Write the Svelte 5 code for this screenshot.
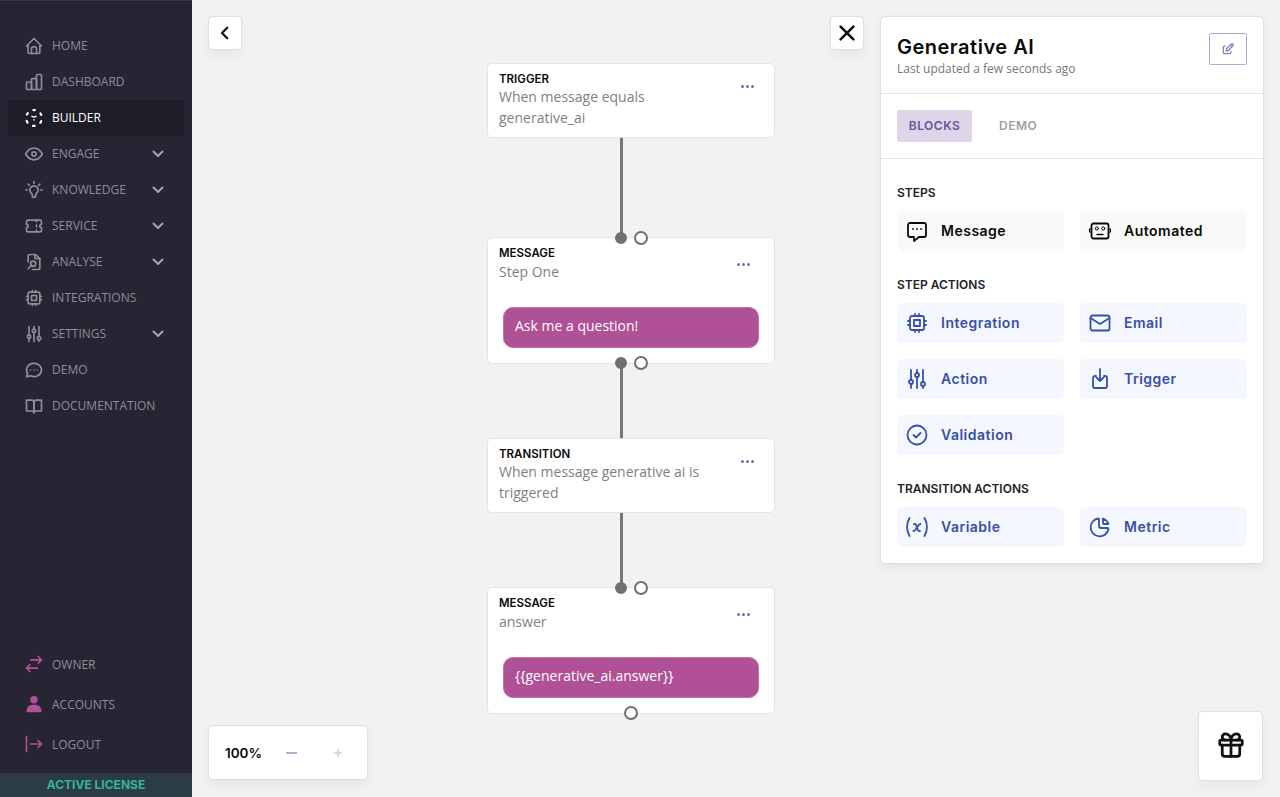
<script>
  const icons = {
    home: '<path d="M5 12H3l9-9 9 9h-2"/><path d="M5 12v7a2 2 0 0 0 2 2h10a2 2 0 0 0 2-2v-7"/><path d="M9 21v-6a2 2 0 0 1 2-2h2a2 2 0 0 1 2 2v6"/>',
    chart: '<rect x="3" y="12" width="6" height="9" rx="1"/><rect x="9" y="8" width="6" height="13" rx="1"/><rect x="15" y="3" width="6" height="18" rx="1"/>',
    builder: '<circle cx="12" cy="12" r="9.500" stroke-width="2.600" stroke-dasharray="2.200 7.750" stroke-dashoffset="1.100" transform="rotate(-90 12 12)"/><path d="M9.500 10l2.500 1 2.500-1M12 14v.5" stroke-width="1.800"/>',
    eye: '<circle cx="12" cy="12" r="2.5"/><path d="M22 12c-2.667 4.667-6 7-10 7s-7.333-2.333-10-7c2.667-4.667 6-7 10-7s7.333 2.333 10 7"/>',
    bulb: '<path d="M2 12h2m8-10v2m8 8h2M5 5l1.4 1.4M19 5l-1.4 1.4"/><path d="M9 16a5 5 0 1 1 6 0 3.5 3.5 0 0 0-1 3 2 2 0 0 1-4 0 3.5 3.5 0 0 0-1-3"/>',
    ticket: '<path d="M15 5v2M15 11v2M15 17v2"/><path d="M5 5h14a2 2 0 0 1 2 2v3a2 2 0 0 0 0 4v3a2 2 0 0 1-2 2H5a2 2 0 0 1-2-2v-3a2 2 0 0 0 0-4V7a2 2 0 0 1 2-2"/>',
    analyse: '<path d="M13 3v4a1 1 0 0 0 1 1h5"/><path d="M10 21h7a2 2 0 0 0 2-2V8l-5-5H7a2 2 0 0 0-2 2v7"/><circle cx="11" cy="14" r="3"/><path d="M8.8 16.2L5 20"/>',
    cpu: '<rect x="5" y="5" width="14" height="14" rx="2"/><rect x="9" y="9" width="6" height="6"/><path d="M3 10h2M3 14h2M10 3v2M14 3v2M21 10h-2M21 14h-2M14 21v-2M10 21v-2"/>',
    sliders: '<circle cx="6" cy="15" r="2"/><circle cx="12" cy="8" r="2"/><circle cx="18" cy="17" r="2"/><path d="M6 3v10M6 17v4M12 3v3M12 10v11M18 3v12M18 19v2"/>',
    chat: '<path d="M3 20l1.3-3.9a9 8 0 1 1 3.4 2.9L3 20"/><path d="M12 12v.01M8 12v.01M16 12v.01"/>',
    book: '<path d="M3 5h6a3 3 0 0 1 3 3v12a3 3 0 0 0-3-2H3z"/><path d="M21 5h-6a3 3 0 0 0-3 3v12a3 3 0 0 1 3-2h6z"/>',
    swap: '<path d="M21 7H8M17 3l4 4-4 4"/><path d="M3 17h13M7 13l-4 4 4 4"/>',
    user: '<circle cx="12" cy="7" r="4.5" fill="currentColor" stroke="none"/><path d="M3 22v-2a7 7 0 0 1 7-7h4a7 7 0 0 1 7 7v2z" fill="currentColor" stroke="none"/>',
    logout: '<path d="M3 3v18"/><path d="M8 12h13M17 8l4 4-4 4"/>',
    message: '<path d="M5 4h14a2 2 0 0 1 2 2v10a2 2 0 0 1-2 2h-5l-5 4v-4H5a2 2 0 0 1-2-2V6a2 2 0 0 1 2-2z"/><path d="M8 10v.01M12 10v.01M16 10v.01"/>',
    robot: '<rect x="3.500" y="4.500" width="17" height="15" rx="2"/><circle cx="8.800" cy="9.500" r="1.600" stroke-width="1"/><circle cx="15.200" cy="9.500" r="1.600" stroke-width="1"/><path d="M9 15.500h6" stroke-width="1.400"/><path d="M3.500 10H1.500v3h2M20.500 10h2v3h-2" stroke-width="1.100"/>',
    email: '<rect x="2.5" y="4.5" width="19" height="15" rx="2"/><path d="M2.5 7l9.5 6 9.5-6"/>',
    trigger: '<path d="M8 9H7a2 2 0 0 0-2 2v8a2 2 0 0 0 2 2h10a2 2 0 0 0 2-2v-8a2 2 0 0 0-2-2h-1"/><path d="M12 2v12M8.5 10.5L12 14l3.500-3.500"/>',
    check: '<circle cx="12" cy="12" r="9.500"/><path d="M8.500 12l2.500 2.500 4.500-4.500"/>',
    variable: '<path d="M4.500 3c-3 5.500-3 12.500 0 18m15-18c3 5.500 3 12.500 0 18"/><path d="M9 9h1c1 0 1 1 2 3.500s1 3.500 2 3.500h1"/><path d="M8.500 16c1.500 0 2.500-2 3.500-3.500S14 9 15.500 9"/>',
    pie: '<path d="M10 3.500a9 9 0 1 0 10.500 10.500 1 1 0 0 0-1-1H13a2 2 0 0 1-2-2V4.500a.9.9 0 0 0-1-1"/><path d="M15 3.500A9 9 0 0 1 20.500 9H16a1 1 0 0 1-1-1z"/>',
    gift: '<rect x="3" y="8" width="18" height="4" rx="1"/><path d="M12 8v13"/><path d="M19 12v7a2 2 0 0 1-2 2H7a2 2 0 0 1-2-2v-7"/><path d="M7.500 8a2.500 2.500 0 0 1 0-5C10 3 12 5.500 12 8c0-2.500 2-5 4.500-5a2.500 2.500 0 0 1 0 5"/>',
    edit: '<path d="M7 7H6a2 2 0 0 0-2 2v9a2 2 0 0 0 2 2h9a2 2 0 0 0 2-2v-1"/><path d="M20.400 6.600a2.100 2.100 0 0 0-3-3L9 12v3h3z"/><path d="M16 5l3 3"/>'
  };

  const mainNav = [
    { label: 'Home', icon: 'home' },
    { label: 'Dashboard', icon: 'chart' },
    { label: 'Builder', icon: 'builder', active: true },
    { label: 'Engage', icon: 'eye', more: true },
    { label: 'Knowledge', icon: 'bulb', more: true },
    { label: 'Service', icon: 'ticket', more: true },
    { label: 'Analyse', icon: 'analyse', more: true },
    { label: 'Integrations', icon: 'cpu' },
    { label: 'Settings', icon: 'sliders', more: true },
    { label: 'Demo', icon: 'chat' },
    { label: 'Documentation', icon: 'book' }
  ];

  const bottomNav = [
    { label: 'Owner', icon: 'swap' },
    { label: 'Accounts', icon: 'user' },
    { label: 'Logout', icon: 'logout' }
  ];

  // canvas coordinates of the flow diagram
  const nodes = [
    { top: 63, height: 75, label: 'TRIGGER', text: 'When message equals generative_ai', dotsRight: 20, dotsTop: 21 },
    { top: 237, height: 127, label: 'MESSAGE', text: 'Step One', bubble: 'Ask me a question!', dotsRight: 24, dotsTop: 25 },
    { top: 438, height: 75, label: 'TRANSITION', text: 'When message generative ai is triggered', dotsRight: 20, dotsTop: 21 },
    { top: 587, height: 127, label: 'MESSAGE', text: 'answer', bubble: '{{generative_ai.answer}}', dotsRight: 24, dotsTop: 25 }
  ];

  const lines = [
    { top: 138, height: 100 },
    { top: 364, height: 74 },
    { top: 513, height: 74 }
  ];

  const ports = [
    { x: 429, y: 238, filled: true },
    { x: 449, y: 238 },
    { x: 429, y: 363, filled: true },
    { x: 449, y: 363 },
    { x: 429, y: 588, filled: true },
    { x: 449, y: 588 },
    { x: 439, y: 713 }
  ];

  const sections = [
    { title: 'Steps', plain: true, items: [{ label: 'Message', icon: 'message' }, { label: 'Automated', icon: 'robot' }] },
    {
      title: 'Step Actions',
      items: [
        { label: 'Integration', icon: 'cpu' },
        { label: 'Email', icon: 'email' },
        { label: 'Action', icon: 'sliders' },
        { label: 'Trigger', icon: 'trigger' },
        { label: 'Validation', icon: 'check' }
      ]
    },
    { title: 'Transition Actions', items: [{ label: 'Variable', icon: 'variable' }, { label: 'Metric', icon: 'pie' }] }
  ];
</script>

{#snippet icon(name, size, width)}
  <svg viewBox="0 0 24 24" width={size} height={size} fill="none" stroke="currentColor" stroke-width={width} stroke-linecap="round" stroke-linejoin="round">
    {@html icons[name]}
  </svg>
{/snippet}

<div class="shell">
  <aside class="sidebar">
    <nav class="main-nav">
      {#each mainNav as item}
        <div class="nav-item" class:active={item.active}>
          <span class="nav-icon">{@render icon(item.icon, 20, 2)}</span>
          <span class="nav-label">{item.label}</span>
          {#if item.more}
            <svg class="caret" viewBox="0 0 12 8" width="12" height="8" fill="none" stroke="currentColor" stroke-width="2" stroke-linecap="round" stroke-linejoin="round"><path d="M1.500 1.500L6 6l4.500-4.500" /></svg>
          {/if}
        </div>
      {/each}
    </nav>
    <nav class="bottom-nav">
      {#each bottomNav as item}
        <div class="nav-item bottom">
          <span class="nav-icon pink">{@render icon(item.icon, 20, 2)}</span>
          <span class="nav-label">{item.label}</span>
        </div>
      {/each}
    </nav>
    <div class="license">ACTIVE LICENSE</div>
  </aside>

  <main class="canvas">
    {#each lines as line}
      <div class="line" style="top: {line.top}px; height: {line.height}px"></div>
    {/each}

    {#each nodes as node}
      <div class="node" style="top: {node.top}px; height: {node.height}px">
        <div class="node-label">{node.label}</div>
        <div class="node-text" class:message={node.bubble}>{node.text}</div>
        <div class="dots" style="top: {node.dotsTop}px; right: {node.dotsRight}px"><i></i><i></i><i></i></div>
        {#if node.bubble}
          <div class="bubble">{node.bubble}</div>
        {/if}
      </div>
    {/each}

    {#each ports as port}
      <div class="port" class:filled={port.filled} style="left: {port.x}px; top: {port.y}px"></div>
    {/each}

    <button class="tool back" aria-label="Back">
      <svg viewBox="0 0 24 24" width="18" height="18" fill="none" stroke="#111" stroke-width="3" stroke-linecap="round" stroke-linejoin="round"><path d="M15 5l-7 7 7 7" /></svg>
    </button>
    <button class="tool close" aria-label="Close">
      <svg viewBox="0 0 24 24" width="22" height="22" fill="none" stroke="#111" stroke-width="2.800" stroke-linecap="round" stroke-linejoin="round"><path d="M5 5l14 14M19 5L5 19" /></svg>
    </button>

    <div class="zoom">
      <span class="zoom-value">100%</span>
      <span class="zoom-minus"></span>
      <span class="zoom-plus"></span>
    </div>

    <button class="tool gift" aria-label="What's new">{@render icon('gift', 30, 2.200)}</button>

    <section class="panel">
      <header class="panel-head">
        <div>
          <h1>Generative AI</h1>
          <p>Last updated a few seconds ago</p>
        </div>
        <button class="edit" aria-label="Edit">{@render icon('edit', 14, 2.200)}</button>
      </header>
      <div class="tabs">
        <span class="tab selected">BLOCKS</span>
        <span class="tab">DEMO</span>
      </div>
      <div class="blocks">
        {#each sections as section}
          <h2>{section.title}</h2>
          <div class="tiles">
            {#each section.items as item}
              <div class="tile" class:plain={section.plain}>
                {@render icon(item.icon, 24, 1.800)}
                <span>{item.label}</span>
              </div>
            {/each}
          </div>
        {/each}
      </div>
    </section>
  </main>
</div>

<style>
  :global(body) {
    margin: 0;
    background: #f2f2f2;
    font-family: 'Open Sans', 'Liberation Sans', sans-serif;
  }

  .shell {
    display: flex;
    height: 797px;
    overflow: hidden;
  }

  .sidebar {
    width: 192px;
    flex: none;
    display: flex;
    flex-direction: column;
    background: #272433;
    border-top: 1px solid #3a3846;
    box-sizing: border-box;
  }

  .main-nav {
    flex: 1;
    padding: 27px 8px 0;
  }

  .bottom-nav {
    padding: 0 8px 9px;
  }

  .nav-item {
    display: flex;
    align-items: center;
    height: 36px;
    padding: 0 20px 0 16px;
    border-radius: 4px;
    color: #8f8d96;
  }

  .nav-item.bottom {
    height: 40px;
  }

  .nav-item.active {
    background: #1e1c26;
    color: #fff;
  }

  .nav-icon {
    display: flex;
    width: 28px;
  }

  .nav-icon.pink {
    color: #b05097;
  }

  .nav-label {
    flex: 1;
    font-size: 12px;
    text-transform: uppercase;
  }

  .main-nav .nav-label {
    padding-bottom: 2px;
  }

  .caret {
    color: #a5a3ab;
  }

  .license {
    height: 24px;
    line-height: 24px;
    text-align: center;
    background: #2b3c45;
    border-radius: 3px 3px 0 0;
    color: #33b498;
    font-family: Inter, 'Liberation Sans', sans-serif;
    font-size: 12px;
    font-weight: 700;
  }

  .canvas {
    position: relative;
    flex: 1;
  }

  .line {
    position: absolute;
    left: 428px;
    width: 3px;
    background: #777;
  }

  .node {
    position: absolute;
    left: 295px;
    width: 288px;
    box-sizing: border-box;
    padding: 8px 11px;
    background: #fff;
    border: 1px solid #e4e4e8;
    border-radius: 5px;
  }

  .node-label {
    font-family: Inter, 'Liberation Sans', sans-serif;
    font-size: 11.5px;
    font-weight: 600;
    line-height: 14px;
    color: #0a0a0a;
  }

  .node-text {
    width: 230px;
    font-size: 14px;
    line-height: 21px;
    color: #808080;
  }

  .node-text.message {
    margin-top: 1px;
  }

  .dots {
    position: absolute;
    display: flex;
    gap: 2px;
  }

  .dots i {
    width: 3px;
    height: 3px;
    border-radius: 50%;
    background: #7d66b0;
  }

  .bubble {
    position: absolute;
    left: 15px;
    right: 15px;
    top: 69px;
    height: 41px;
    box-sizing: border-box;
    padding-left: 11px;
    line-height: 36px;
    background: #b05097;
    border: 1px solid #c173ac;
    border-radius: 10px;
    color: #fff;
    font-size: 14px;
  }

  .port {
    position: absolute;
    width: 14px;
    height: 14px;
    margin: -7px 0 0 -7px;
    box-sizing: border-box;
    background: #fff;
    border: 2px solid #707070;
    border-radius: 50%;
  }

  .port.filled {
    width: 12px;
    height: 12px;
    margin: -6px 0 0 -6px;
    background: #707070;
  }

  .tool {
    position: absolute;
    display: flex;
    align-items: center;
    justify-content: center;
    padding: 0;
    background: #fff;
    border: 1px solid #dedee6;
    border-radius: 4px;
    box-shadow: 0 6px 12px rgba(60, 60, 90, 0.06);
  }

  .back {
    left: 16px;
    top: 16px;
    width: 34px;
    height: 34px;
  }

  .close {
    left: 638px;
    top: 16px;
    width: 34px;
    height: 34px;
  }

  .gift {
    right: 17px;
    top: 711px;
    width: 65px;
    height: 70px;
    padding-bottom: 2px;
    color: #111;
  }

  .zoom {
    position: absolute;
    left: 16px;
    top: 725px;
    width: 160px;
    height: 55px;
    box-sizing: border-box;
    display: flex;
    align-items: center;
    padding-left: 16px;
    background: #fff;
    border: 1px solid #dedee6;
    border-radius: 4px;
    box-shadow: 0 6px 12px rgba(60, 60, 90, 0.06);
  }

  .zoom-value {
    width: 61px;
    font-family: Inter, 'Liberation Sans', sans-serif;
    font-size: 13.500px;
    font-weight: 600;
    color: #0a0a0a;
  }

  .zoom-minus {
    width: 11px;
    height: 2px;
    background: #b9abd4;
  }

  .zoom-plus {
    position: relative;
    width: 8px;
    height: 2px;
    margin-left: 37px;
    background: #dcd6e8;
  }

  .zoom-plus::after {
    content: '';
    position: absolute;
    left: 3px;
    top: -3px;
    width: 2px;
    height: 8px;
    background: #dcd6e8;
  }

  .panel {
    position: absolute;
    left: 688px;
    top: 16px;
    width: 384px;
    height: 548px;
    box-sizing: border-box;
    background: #fff;
    border: 1px solid #dedee6;
    border-radius: 5px;
    box-shadow: 0 4px 10px rgba(60, 60, 90, 0.08);
  }

  .panel-head {
    display: flex;
    justify-content: space-between;
    height: 77px;
    box-sizing: border-box;
    padding: 16px 16px 0;
    border-bottom: 1px solid #e4e4ea;
  }

  h1 {
    margin: 0;
    font-family: Inter, 'Liberation Sans', sans-serif;
    font-size: 20px;
    font-weight: 600;
    line-height: 28px;
    letter-spacing: 0.5px;
    color: #0a0a0a;
  }

  .panel-head p {
    margin: 0;
    font-size: 12px;
    line-height: 16px;
    color: #777;
  }

  .edit {
    display: flex;
    align-items: center;
    justify-content: center;
    width: 38px;
    height: 32px;
    padding: 0;
    background: #fff;
    border: 1px solid #b7a8d2;
    border-radius: 2px;
    color: #8f78bd;
  }

  .tabs {
    display: flex;
    height: 65px;
    box-sizing: border-box;
    padding: 16px 16px 0;
    border-bottom: 1px solid #e4e4ea;
    gap: 3px;
  }

  .tab {
    height: 32px;
    padding: 0 12px;
    line-height: 32px;
    font-family: Inter, 'Liberation Sans', sans-serif;
    font-size: 12px;
    font-weight: 600;
    letter-spacing: 0.5px;
    color: #a0a0a0;
    border-radius: 2px;
  }

  .tab.selected {
    width: 75px;
    box-sizing: border-box;
    margin-right: 12px;
    background: #dcd6e8;
    color: #6b4fa0;
    text-align: center;
    padding: 0;
  }

  .blocks {
    padding: 26px 16px 0;
  }

  h2 {
    margin: 0 0 10px;
    font-family: Inter, 'Liberation Sans', sans-serif;
    font-size: 12px;
    font-weight: 600;
    line-height: 16px;
    text-transform: uppercase;
    color: #222;
  }

  .tiles {
    display: grid;
    grid-template-columns: 167px 167px;
    gap: 16px;
    margin-bottom: 26px;
  }

  .tile {
    display: flex;
    align-items: center;
    gap: 12px;
    height: 40px;
    padding-left: 8px;
    background: #f5f7ff;
    border-radius: 5px;
    color: #3750a8;
    font-family: Inter, 'Liberation Sans', sans-serif;
    font-size: 14px;
    font-weight: 600;
    letter-spacing: 0.5px;
  }

  .tile span {
    padding-bottom: 2px;
  }

  .tile.plain {
    background: #f9f9f9;
    color: #0a0a0a;
  }
</style>
